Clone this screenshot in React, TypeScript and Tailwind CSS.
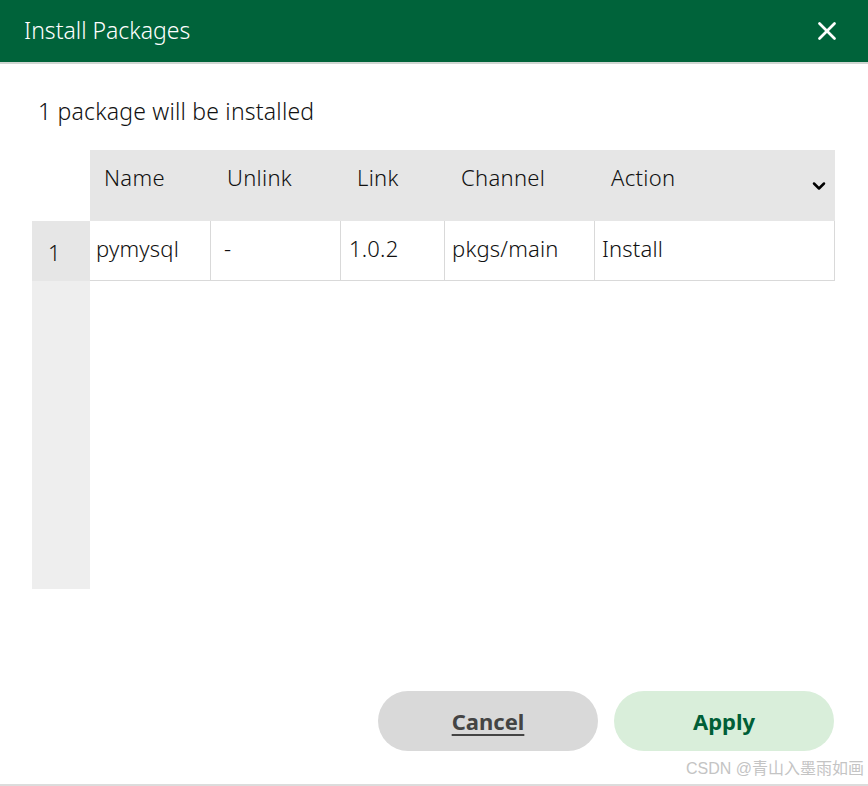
import { X, ChevronDown } from 'lucide-react'

const cols = [
  { label: 'Name', w: 'w-[121px]', pad: 'pl-[14px]', cell: 'pymysql', cellPad: 'pl-[6px]' },
  { label: 'Unlink', w: 'w-[130px]', pad: 'pl-[16px]', cell: '-', cellPad: 'pl-[13px]' },
  { label: 'Link', w: 'w-[104px]', pad: 'pl-[16px]', cell: '1.0.2', cellPad: 'pl-[8px]' },
  { label: 'Channel', w: 'w-[150px]', pad: 'pl-[16px]', cell: 'pkgs/main', cellPad: 'pl-[7px]' },
  { label: 'Action', w: 'flex-1', pad: 'pl-[16px]', cell: 'Install', cellPad: 'pl-[7px]' },
]

export default function App() {
  return (
    <div className="w-[868px] h-[786px] bg-white flex flex-col font-['Noto_Sans',sans-serif] text-[#111111] overflow-hidden">
      {/* header */}
      <div className="h-[64px] shrink-0 bg-[#00633a] border-b-2 border-[#d0d6d2] flex items-center justify-between pl-[24px] pr-[26px]">
        <h1 className="text-white text-[23px] font-light tracking-[0px] pb-[2px]">Install Packages</h1>
        <X className="w-[30px] h-[30px] text-white" strokeWidth={2.2} />
      </div>

      <div className="flex-1 flex flex-col px-[32px]">
        <p className="mt-[32px] ml-[6px] text-[23px] font-light tracking-[0.2px] leading-[30px]">1 package will be installed</p>

        {/* table */}
        <div className="mt-[24px] flex">
          <div className="w-[58px] shrink-0 flex flex-col">
            <div className="h-[71px]" />
            <div className="h-[60px] bg-[#e6e6e6] flex items-center pl-[16px] text-[22px] font-light pt-[3px]">1</div>
            <div className="h-[308px] bg-[#eeeeee]" />
          </div>
          <div className="flex-1 flex flex-col mr-[1px]">
            <div className="h-[71px] bg-[#e6e6e6] flex relative">
              {cols.map((c) => (
                <div key={c.label} className={`${c.w} ${c.pad} pt-[11px] text-[22px] font-light tracking-[0.3px]`}>
                  {c.label}
                </div>
              ))}
              <ChevronDown className="absolute right-[6px] top-[26px] w-[20px] h-[20px] text-black" strokeWidth={3} />
            </div>
            <div className="h-[60px] flex border-b border-r border-[#d9d9d9]">
              {cols.map((c, i) => (
                <div
                  key={c.label}
                  className={`${c.w} ${c.cellPad} ${i < cols.length - 1 ? 'border-r border-[#d9d9d9]' : ''} flex items-center text-[22px] font-light tracking-[0.2px] pb-[4px]`}
                >
                  {c.cell}
                </div>
              ))}
            </div>
          </div>
        </div>

        <div className="flex-1" />

        {/* buttons */}
        <div className="flex justify-end gap-[16px] mr-[2px]">
          <button className="w-[220px] h-[60px] rounded-full bg-[#d9d9d9] text-[#444444] text-[22px] font-bold underline underline-offset-[4px] decoration-2">
            Cancel
          </button>
          <button className="w-[220px] h-[60px] rounded-full bg-[#d9eeda] text-[#005e37] text-[22px] font-bold">
            Apply
          </button>
        </div>
        <div className="h-[33px] flex items-end justify-end pb-[3px] -mr-[28px]">
          <span className="text-[16px] text-[#c4c4c4] font-['Liberation_Sans','Noto_Sans_CJK_SC',sans-serif]">CSDN @青山入墨雨如画</span>
        </div>
      </div>
      <div className="h-[2px] bg-[#dcdcdc] shrink-0" />
    </div>
  )
}
